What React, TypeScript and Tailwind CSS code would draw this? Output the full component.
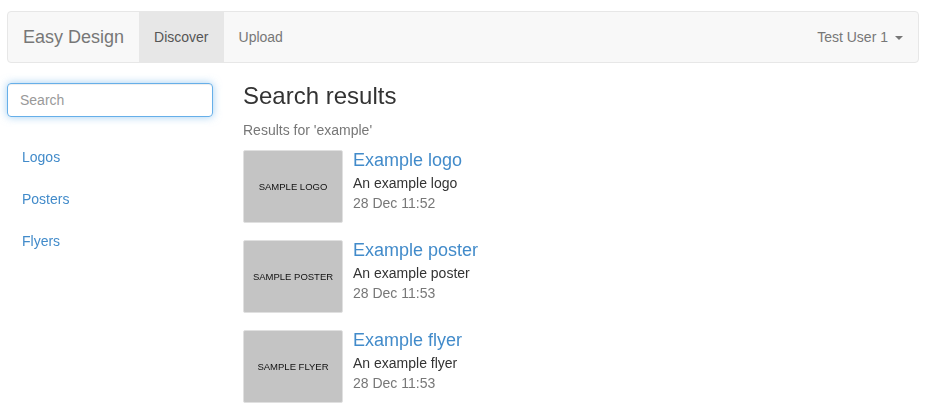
const results = [
  { title: "Example logo", desc: "An example logo", date: "28 Dec 11:52", label: "SAMPLE LOGO" },
  { title: "Example poster", desc: "An example poster", date: "28 Dec 11:53", label: "SAMPLE POSTER" },
  { title: "Example flyer", desc: "An example flyer", date: "28 Dec 11:53", label: "SAMPLE FLYER" },
];

const categories = ["Logos", "Posters", "Flyers"];

export default function App() {
  return (
    <div className="min-h-screen bg-white text-[14px] leading-[20px] text-[#333]" style={{ fontFamily: '"Liberation Sans", Arial, sans-serif' }}>
      {/* Navbar */}
      <nav className="mx-[7px] pt-[11px]">
        <div className="flex h-[52px] items-stretch rounded-[4px] border border-[#e7e7e7] bg-[#f8f8f8]">
          <span className="flex items-center px-[15px] text-[18px] text-[#777]">Easy Design</span>
          <span className="flex items-center bg-[#e7e7e7] px-[15px] text-[#555]">Discover</span>
          <span className="flex items-center px-[15px] text-[#777]">Upload</span>
          <span className="ml-auto flex items-center px-[15px] text-[#777]">
            Test User 1
            <span className="ml-[7px] mt-[2px] h-0 w-0 border-x-[4px] border-t-[4px] border-x-transparent border-t-[#777]" />
          </span>
        </div>
      </nav>

      <div className="mt-[20px] flex gap-[30px] px-[7px]">
        {/* Sidebar */}
        <aside className="w-[206px] shrink-0">
          <input
            autoFocus
            placeholder="Search"
            className="h-[34px] w-full rounded-[4px] border border-[#66afe9] px-[12px] text-[14px] text-[#555] placeholder-[#999] outline-none shadow-[inset_0_1px_1px_rgba(0,0,0,0.075),0_0_8px_rgba(102,175,233,0.6)]"
          />
          <ul className="mt-[20px] flex flex-col gap-[2px]">
            {categories.map((c) => (
              <li key={c} className="px-[15px] py-[10px] text-[#428bca]">{c}</li>
            ))}
          </ul>
        </aside>

        {/* Main */}
        <main className="flex-1">
          <h3 className="text-[24px] leading-[26px] text-[#333]">Search results</h3>
          <p className="mt-[11px] text-[#777]">Results for 'example'</p>
          <div className="mt-[10px] flex flex-col gap-[17px]">
            {results.map((r) => (
              <div key={r.title} className="flex gap-[10px]">
                <div className="flex h-[73px] w-[100px] shrink-0 items-center justify-center rounded-[2px] border border-[#e0e0e0] bg-[#c4c4c4] text-[9.5px] text-[#111]">
                  {r.label}
                </div>
                <div>
                  <h4 className="text-[18px] leading-[20px] text-[#428bca]">{r.title}</h4>
                  <p className="mt-[3px]">{r.desc}</p>
                  <p className="text-[#777]">{r.date}</p>
                </div>
              </div>
            ))}
          </div>
        </main>
      </div>
    </div>
  );
}
